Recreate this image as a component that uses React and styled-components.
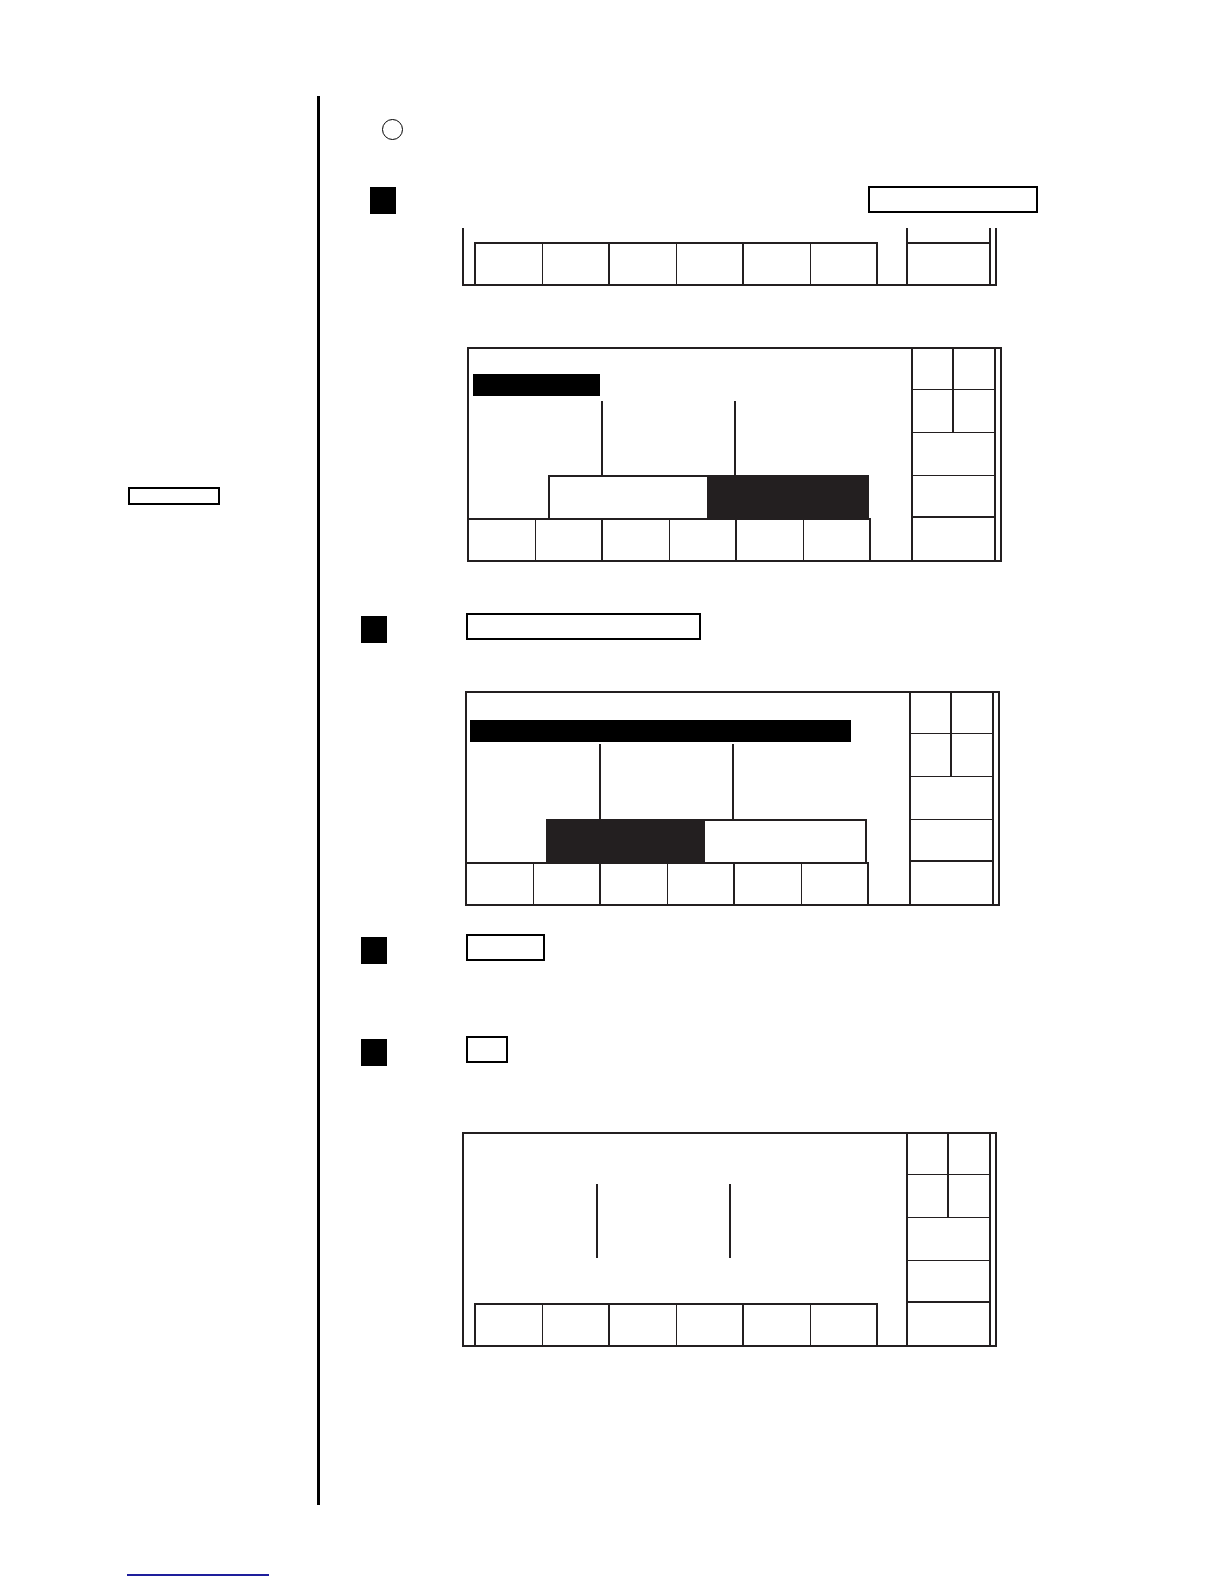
import React from 'react';
import styled, { createGlobalStyle } from 'styled-components';

const INK = '#231f20';

const GlobalStyle = createGlobalStyle`
  html, body {
    margin: 0;
    padding: 0;
    background: #fff;
  }
  body {
    font-family: "Liberation Sans", Arial, sans-serif;
  }
  *, *::before, *::after {
    box-sizing: border-box;
  }
`;

const Page = styled.div`
  width: 1224px;
  height: 1584px;
  padding-top: 96px;
  background: #fff;
  overflow: hidden;
`;

const Columns = styled.div`
  display: flex;
  height: 1409px;
`;

const Sidebar = styled.aside`
  width: 317px;
  padding: 391px 0 0 128px;
`;

const MarginNote = styled.div`
  width: 92px;
  height: 18px;
  border: 2px solid #000;
`;

const Content = styled.main`
  flex: 1;
  border-left: 3px solid #000;
  display: flex;
  flex-direction: column;
  align-items: flex-start;
`;

const Bullet = styled.div`
  margin: 23px 0 0 62px;
  width: 21px;
  height: 21px;
  border: 1.5px solid #000;
  border-radius: 50%;
`;

const StepRow = styled.div`
  display: flex;
  align-items: flex-start;
  margin-top: ${p => p.$top}px;
  padding-left: ${p => p.$indent}px;
`;

const StepMark = styled.span`
  display: block;
  width: 26px;
  height: 27px;
  margin-top: ${p => p.$drop || 0}px;
  background: #000;
`;

const KeyBox = styled.span`
  display: block;
  margin-left: ${p => p.$gap}px;
  width: ${p => p.$w}px;
  height: 27px;
  border: 2px solid #000;
`;

const Screen = styled.div`
  margin: ${p => p.$top}px 0 0 ${p => p.$left}px;
  width: 535px;
  height: ${p => (p.$partial ? 58 : p.$h || 213)}px;
  border: 2px solid ${INK};
  ${p => p.$partial && 'border-top: none;'}
  display: grid;
  grid-template-columns: 442px 85px 1fr;
`;

const MainArea = styled.div`
  display: flex;
  flex-direction: column;
  align-items: flex-start;
  padding-top: ${p => p.$pad || 0}px;
`;

const Highlight = styled.div`
  width: ${p => p.$w}px;
  height: 22px;
  margin-left: ${p => p.$x}px;
  background: #000;
`;

const Dividers = styled.div`
  display: grid;
  grid-template-columns: 134px 133px;
  margin-top: ${p => p.$gap || 0}px;
  ${p => (p.$h ? `height: ${p.$h}px;` : 'flex: 1;')}

  > span {
    border-right: 2px solid ${INK};
  }
`;

const Selection = styled.div`
  display: grid;
  grid-template-columns: 157px 160px;
  margin-left: 79px;
  height: 43px;
  flex-shrink: 0;
  border: 2px solid ${INK};
  border-bottom: none;
`;

const SelectionCell = styled.span`
  background: ${p => (p.$on ? INK : '#fff')};
`;

const KeyRow = styled.div`
  display: grid;
  grid-template-columns: repeat(6, 67px);
  height: 42px;
  flex-shrink: 0;
  margin-top: ${p => (p.$follow ? 0 : 'auto')};
  margin-left: ${p => p.$inset || 0}px;
  border-top: 2px solid ${INK};
  ${p => p.$inset && `border-left: 2px solid ${INK};`}

  > span {
    border-right: 2px solid ${INK};
  }
  > span:nth-child(odd) {
    border-right-width: 1.5px;
  }
`;

const SideKeys = styled.div`
  display: grid;
  grid-template-columns: 1fr 1fr;
  grid-template-rows: 41px 43px 43px 42px 1fr;
  border-left: 2px solid ${INK};
  border-right: 2px solid ${INK};
`;

const SideKey = styled.span`
  ${p => p.$wide && 'grid-column: 1 / -1;'}
  ${p => !p.$last && `border-bottom: ${p.$heavy ? 2.5 : 1.5}px solid ${INK};`}
  ${p => p.$split && `border-right: 2px solid ${INK};`}
`;

const PartialSide = styled.div`
  display: flex;
  flex-direction: column;
  justify-content: flex-end;
  border-left: 2px solid ${INK};
  border-right: 2px solid ${INK};
`;

const PartialKey = styled.span`
  height: 42px;
  border-top: 2.5px solid ${INK};
`;

const Strip = styled.span``;

const Footer = styled.div`
  margin: 69px 0 0 127px;
  width: 142px;
  height: 2px;
  background: #1e1e9c;
`;

const keyCells = Array.from({ length: 6 }, (_, i) => <span key={i} />);

const Side = () => (
  <SideKeys>
    <SideKey $split />
    <SideKey />
    <SideKey $split />
    <SideKey />
    <SideKey $wide />
    <SideKey $wide $heavy />
    <SideKey $wide $last />
  </SideKeys>
);

const EditScreen = ({ top, left, h, bar, barX, pad, gap, dark }) => (
  <Screen $top={top} $left={left} $h={h}>
    <MainArea $pad={pad}>
      <Highlight $w={bar} $x={barX} />
      <Dividers $gap={gap}>
        <span />
        <span />
      </Dividers>
      <Selection>
        <SelectionCell $on={dark === 'left'} />
        <SelectionCell $on={dark === 'right'} />
      </Selection>
      <KeyRow $follow>{keyCells}</KeyRow>
    </MainArea>
    <Side />
    <Strip />
  </Screen>
);

const App = () => (
  <>
    <GlobalStyle />
    <Page>
      <Columns>
        <Sidebar>
          <MarginNote />
        </Sidebar>
        <Content>
          <Bullet />

          <StepRow $top={46} $indent={50}>
            <StepMark $drop={1} />
            <KeyBox $gap={472} $w={170} />
          </StepRow>

          <Screen $top={14} $left={142} $partial>
            <MainArea>
              <KeyRow $inset={10}>{keyCells}</KeyRow>
            </MainArea>
            <PartialSide>
              <PartialKey />
            </PartialSide>
            <Strip />
          </Screen>

          <EditScreen top={61} left={147} h={215} bar={127} barX={4} pad={25} gap={5} dark="right" />

          <StepRow $top={51} $indent={41}>
            <StepMark $drop={3} />
            <KeyBox $gap={79} $w={235} />
          </StepRow>

          <EditScreen top={48} left={145} h={215} bar={381} barX={3} pad={27} gap={2} dark="left" />

          <StepRow $top={28} $indent={41}>
            <StepMark $drop={3} />
            <KeyBox $gap={79} $w={79} />
          </StepRow>

          <StepRow $top={72} $indent={41}>
            <StepMark $drop={3} />
            <KeyBox $gap={79} $w={42} />
          </StepRow>

          <Screen $top={66} $left={142} $h={215}>
            <MainArea $pad={50}>
              <Dividers $h={74}>
                <span />
                <span />
              </Dividers>
              <KeyRow $inset={10}>{keyCells}</KeyRow>
            </MainArea>
            <Side />
            <Strip />
          </Screen>
        </Content>
      </Columns>
      <Footer />
    </Page>
  </>
);

export default App;
